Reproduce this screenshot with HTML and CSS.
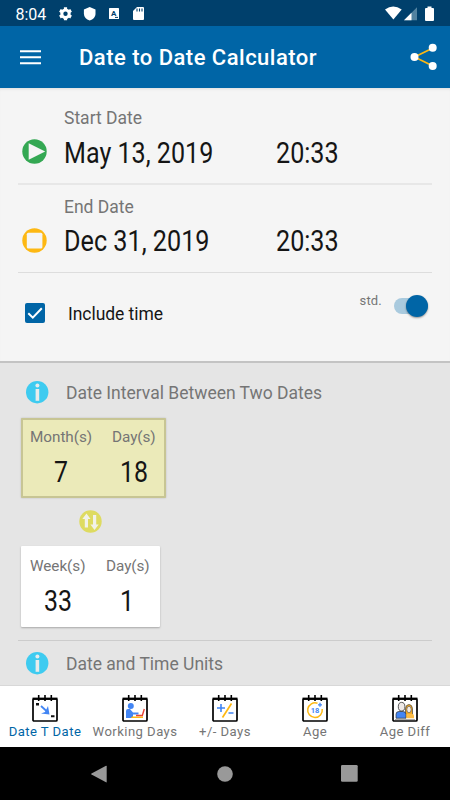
FILE: index.html
```html
<!DOCTYPE html>
<html lang="en">
<head>
<meta charset="utf-8">
<title>Date to Date Calculator</title>
<link rel="stylesheet" href="styles.css">
</head>
<body>
<svg width="0" height="0" class="defs" aria-hidden="true">
  <defs>
    <g id="calendar">
      <rect x="1" y="4" width="24" height="22" rx="1" fill="#fff" stroke="#000" stroke-width="1.7"/>
      <path d="M.5 3.7h25" stroke="#000" stroke-width="2.2"/>
      <path d="M6.700 0v6M13 0v6M19.300 0v6" stroke="#000" stroke-width="1.600"/>
    </g>
    <g id="info">
      <circle cx="11.200" cy="11.200" r="11.200" fill="#3ecbf0"/>
      <circle cx="11.400" cy="4.500" r="2" fill="#e8ecec"/>
      <path d="M9.600 8h3.600v11.800H9.600z" fill="#e8ecec"/>
    </g>
  </defs>
</svg>
<div class="screen">
  <header class="status">
    <span class="clock">8:04</span>
    <svg class="status-left" width="90" height="16" viewBox="0 0 90 16">
      <circle cx="7.500" cy="7.700" r="3.700" fill="none" stroke="#fff" stroke-width="3"/>
      <path d="M7.500 1.200v2.200M7.500 12v2.200M1.900 4.400l1.900 1.100M11.200 9.900l1.900 1.100M1.900 11l1.900-1.100M11.200 5.500l1.900-1.100" stroke="#fff" stroke-width="3.200"/>
      <path d="M31.700 1l5.800 2.500v4.300c0 3.200-2.300 5.600-5.800 6.700-3.500-1.100-5.800-3.500-5.800-6.700V3.500z" fill="#fff"/>
      <rect x="51" y="2" width="10" height="11" rx=".6" fill="#fff"/>
      <text x="55.600" y="10.300" class="glyph">A</text>
      <path d="M57 11.400h3" stroke="#00406c" stroke-width="1"/>
      <path d="M79 1h6q1 0 1 1v11q0 1-1 1H76q-1 0-1-1V5z" fill="#fff"/>
      <path d="M79 2.500v3M81.500 2.500v3M84 2.500v3" stroke="#00406c" stroke-width="1.100"/>
    </svg>
    <svg class="status-right" width="50" height="16" viewBox="0 0 50 16">
      <path d="M0 3.500Q8.200-2.500 16.700 3.500L8.400 13.500z" fill="#fff"/>
      <path d="M19 14.300L32 1.300v13z" fill="#5182a0"/>
      <path d="M19 14.300l7.500-7.500v7.500z" fill="#fff"/>
      <path d="M40 3q0-1 1-1h1.500V.4h4V2H48q1 0 1 1v11q0 1-1 1h-7q-1 0-1-1z" fill="#fff"/>
    </svg>
  </header>
  <div class="appbar">
    <svg width="21" height="15" viewBox="0 0 21 15"><path d="M0 1.200h21M0 7.300h21M0 13.200h21" stroke="#fff" stroke-width="2"/></svg>
    <h1>Date to Date Calculator</h1>
    <svg class="share" width="28" height="28" viewBox="0 0 28 28">
      <path d="M23 5L4.500 14 23 23" fill="none" stroke="#fdb813" stroke-width="1.700"/>
      <g fill="#fff"><circle cx="22.700" cy="4.800" r="4"/><circle cx="4.500" cy="14" r="4"/><circle cx="22.700" cy="23" r="4"/></g>
    </svg>
  </div>

  <section class="form">
    <div class="entry">
      <svg class="mark" width="25" height="25" viewBox="0 0 25 25"><circle cx="12.500" cy="12.500" r="12.200" fill="#34a853"/><path d="M6.700 4.200L23.200 12.500 6.700 20.800z" fill="#f5f5f5"/></svg>
      <div class="label">Start Date</div>
      <svg class="num date" width="160" height="38"><text x="0" y="28" textLength="149.300" lengthAdjust="spacingAndGlyphs">May 13, 2019</text></svg>
      <svg class="num time" width="80" height="38"><text x="0" y="28" textLength="62.600" lengthAdjust="spacingAndGlyphs">20:33</text></svg>
    </div>
    <div class="entry second">
      <svg class="mark" width="25" height="25" viewBox="0 0 25 25"><circle cx="12.500" cy="12.500" r="12.200" fill="#fdb813"/><rect x="4.800" y="4.800" width="15.600" height="15.600" rx="1.500" fill="#f5f5f5"/></svg>
      <div class="label">End Date</div>
      <svg class="num date" width="160" height="38"><text x="0" y="27" textLength="145.500" lengthAdjust="spacingAndGlyphs">Dec 31, 2019</text></svg>
      <svg class="num time" width="80" height="38"><text x="0" y="27" textLength="62.600" lengthAdjust="spacingAndGlyphs">20:33</text></svg>
    </div>
    <div class="options">
      <svg width="20" height="20" viewBox="0 0 20 20"><rect width="20" height="20" rx="2" fill="#0065a6"/><path d="M3.300 10.200l4.500 4.400 9-9.300" fill="none" stroke="#fff" stroke-width="2"/></svg>
      <span class="include">Include time</span>
      <span class="std">std.</span>
      <span class="switch"><i></i></span>
    </div>
  </section>

  <main class="results">
    <div class="heading">
      <svg width="23" height="23"><use href="#info"/></svg>
      <h2>Date Interval Between Two Dates</h2>
    </div>
    <div class="card active">
      <div class="unit"><span>Month(s)</span><svg class="num" width="62" height="38"><text x="24" y="30" textLength="14" lengthAdjust="spacingAndGlyphs">7</text></svg></div>
      <div class="unit"><span>Day(s)</span><svg class="num" width="44" height="38"><text x="8" y="30" textLength="28" lengthAdjust="spacingAndGlyphs">18</text></svg></div>
    </div>
    <svg class="swap" width="23" height="23" viewBox="0 0 23 23">
      <circle cx="11.500" cy="11.500" r="11.200" fill="#dedb61"/>
      <path d="M7.500 3.500l4 5.500H9v8.500H5.800V9H3.300zM15.500 20l4.200-5.500h-2.500V5h-3.200v9.500h-2.600z" fill="#f2f2e9"/>
    </svg>
    <div class="card plain">
      <div class="unit"><span>Week(s)</span><svg class="num" width="56" height="38"><text x="14" y="30" textLength="28" lengthAdjust="spacingAndGlyphs">33</text></svg></div>
      <div class="unit"><span>Day(s)</span><svg class="num" width="44" height="38"><text x="14" y="30" textLength="14" lengthAdjust="spacingAndGlyphs">1</text></svg></div>
    </div>
    <div class="heading next">
      <svg width="23" height="23"><use href="#info"/></svg>
      <h2>Date and Time Units</h2>
    </div>
  </main>

  <nav class="tabs">
    <a class="tab on"><svg width="26" height="27" viewBox="0 0 26 27"><use href="#calendar"/><path d="M4 8h3v2.500H4zM19 20.300h3.500v2H19z" fill="#111"/><path d="M9 11l6 5.500" stroke="#4285f4" stroke-width="1.800"/><path d="M16 11l1.500 8.500-8.500-1 4-1.500z" fill="#4285f4"/></svg><span>Date T Date</span></a>
    <a class="tab"><svg width="26" height="27" viewBox="0 0 26 27"><use href="#calendar"/><circle cx="8.800" cy="11" r="3" fill="#4285f4"/><path d="M4 16q0-2 2-2h2l3 3.500h5.500v2H11v3.500H4z" fill="#4285f4"/><path d="M10 21.500h11V23H9z" fill="#fdb813"/><path d="M14 20.500h6.300l2-6.500" fill="none" stroke="#ea4335" stroke-width="1.400"/></svg><span>Working Days</span></a>
    <a class="tab"><svg width="26" height="27" viewBox="0 0 26 27"><use href="#calendar"/><path d="M5 13h8M9 9v8M16.500 18h5" stroke="#4285f4" stroke-width="1.600"/><path d="M19.500 8.500L10.500 22.500" stroke="#fdb813" stroke-width="1.700"/></svg><span>+/- Days</span></a>
    <a class="tab"><svg width="26" height="27" viewBox="0 0 26 27"><use href="#calendar"/><path d="M15.500 8.300A7.300 7.300 0 1 0 20.200 14" fill="none" stroke="#fdb813" stroke-width="1.500"/><path d="M16 9.800h4M18 7.800v4" stroke="#4285f4" stroke-width="1.300"/><text x="13" y="18" class="eighteen">18</text></svg><span>Age</span></a>
    <a class="tab"><svg width="26" height="27" viewBox="0 0 26 27"><use href="#calendar"/><path d="M3 24h20v1H3z" fill="#aaa"/><path d="M13.500 22v-8.500Q14 9.500 17 9.500t3.500 4V22z" fill="#f5a81c" stroke="#444" stroke-width=".7"/><path d="M4 23.200v-4Q4 16.500 7 16.500h4q3 0 3 3v3.700z" fill="#4285f4" stroke="#333" stroke-width=".7"/><ellipse cx="9.600" cy="11.700" rx="3.300" ry="4.300" fill="#eee9e7" stroke="#333" stroke-width=".8"/><ellipse cx="17" cy="14.500" rx="2.200" ry="3.200" fill="#f6ece4" stroke="#444" stroke-width=".6"/><path d="M14.300 23.200v-3.500q0-1 1.500-1h3.700q2.500 0 2.500 2v2.500z" fill="#fdbd48"/></svg><span>Age Diff</span></a>
  </nav>
  <footer class="sysnav">
    <svg width="16" height="18" viewBox="0 0 16 18"><path d="M15 .8q.7-.3.700.6v15.400q0 .8-.7.500L.5 9.500q-.7-.5 0-.9z" fill="#999"/></svg>
    <svg class="home" width="16" height="16"><circle cx="8" cy="8" r="7.800" fill="#999"/></svg>
    <svg width="17" height="17"><rect width="16.700" height="16.700" rx="1.300" fill="#999"/></svg>
  </footer>
</div>
</body>
</html>
```
FILE: styles.css
```css
* { box-sizing: border-box; }
body { margin: 0; font-family: Roboto, "Liberation Sans", sans-serif; color: #757575; }
svg { display: block; flex: none; }
h1, h2 { margin: 0; font-weight: 400; white-space: nowrap; }
.defs { position: absolute; }
.screen { width: 450px; height: 800px; overflow: hidden; display: flex; flex-direction: column; background: #f5f5f5; }

.status { height: 26px; flex: none; background: #00406c; display: flex; align-items: flex-start; padding: 6px 15px 0 15.5px; }
.clock { color: #fff; font-size: 16px; font-weight: 400; line-height: 17px; width: 42.5px; }
.status-right { margin-left: auto; }
.glyph { font: 700 8px Roboto, sans-serif; fill: #00406c; text-anchor: middle; }

.appbar { height: 62px; flex: none; background: #0065a6; display: flex; align-items: center; padding: 0 12.5px 0 20px; }
.appbar h1 { margin-left: 38px; color: #fff; font-size: 22px; font-weight: 500; letter-spacing: .48px; }
.share { margin-left: auto; margin-top: -1px; }

.form { height: 275px; flex: none; padding: 0 18px; border-bottom: 2px solid #c3c3c3; box-shadow: inset 0 3px 3px -2px #ddd; }
.entry { height: 97px; display: grid; grid-template-columns: 46px 212px 1fr; grid-template-rows: 26px 38px; padding-top: 17px; border-bottom: 2px solid #e7e7e7; }
.entry.second { height: 88px; padding-top: 9px; border-bottom: 1px solid #ddd; }
.label { grid-column: 2 / 4; grid-row: 1; font-size: 17.5px; line-height: 27px; }
.mark { grid-column: 1; grid-row: 2; margin: 8px 0 0 4px; }
.date { grid-column: 2; grid-row: 2; }
.time { grid-column: 3; grid-row: 2; }
.num { overflow: visible; margin-top: 4px; }
.num text { font: 29px Roboto, sans-serif; fill: #151515; }
.options { display: flex; align-items: flex-start; padding: 30px 3px 0 7px; }
.include { font-size: 17.5px; letter-spacing: -.05px; line-height: 22px; color: #151515; margin-left: 23px; }
.std { margin-left: auto; font-size: 13px; line-height: 16px; margin-top: -10px; letter-spacing: .2px; }
.switch { width: 34px; height: 15.5px; border-radius: 8px; background: #a9cade; margin: -5px 1px 0 12px; display: flex; align-items: center; justify-content: flex-end; }
.switch i { width: 22px; height: 22px; flex: none; border-radius: 50%; background: #0065a6; box-shadow: 0 1px 2px #0006; }

.results { flex: 1; min-height: 0; background: #e5e5e5; padding: 18px 18px 0; overflow: hidden; }
.heading { display: flex; align-items: center; height: 23px; padding-left: 8px; }
.heading h2 { margin-left: 17px; font-size: 17.5px; }
.card { display: flex; justify-content: space-between; background: #fff; height: 81px; margin-left: 3px; padding: 9px 10px 9px 9px; box-shadow: 0 1px 2px #0004; border-radius: 1px; }
.card.active { width: 145px; height: 80px; margin-top: 14px; background: #ebeab9; border: 2px solid #c7c594; padding: 6px 8px 6px 7px; box-shadow: 0 0 2px #0003; }
.card.plain { width: 139px; margin-top: 13px; }
.unit { white-space: nowrap; }
.unit span { display: block; font-size: 15.3px; letter-spacing: -.05px; line-height: 22px; }
.swap { margin: 12px 0 0 61px; }
.heading.next { height: 46px; margin-top: 13px; border-top: 1px solid #ccc; }

.tabs { height: 62px; flex: none; background: #fff; border-top: 1px solid #d8d8d8; display: flex; }
.tab { width: 90px; display: flex; flex-direction: column; align-items: center; padding-top: 9px; font-size: 13.1px; letter-spacing: .45px; white-space: nowrap; }
.tab span { line-height: 17px; margin-top: 1px; }
.tab.on { color: #0065a6; }
.eighteen { font: 700 7.5px Roboto, sans-serif; letter-spacing: 0; fill: #4285f4; text-anchor: middle; }
.sysnav { height: 53px; flex: none; background: #000; display: flex; align-items: center; justify-content: space-between; padding: 0 92px 0 91px; }
.home { margin-left: 2px; }
```
